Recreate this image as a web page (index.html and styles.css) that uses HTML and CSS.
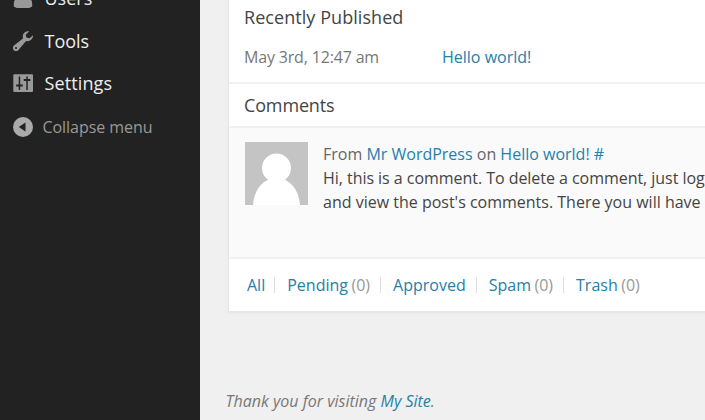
FILE: index.html
```html
<!DOCTYPE html>
<html lang="en">
<head>
<meta charset="utf-8">
<title>Dashboard</title>
<link rel="stylesheet" href="styles.css">
</head>
<body>
<div class="admin">
  <nav class="menu">
    <a class="item"><svg class="icon" viewBox="0 0 20 20"><circle cx="10" cy="5" r="4.500"/><path d="M0.800 18.500v-3c0-3 2-6 5.500-7l3.700 3.500 3.700-3.500c3.500 1 5.500 4 5.500 7v3l-3 1.500h-12.400z"/></svg><span class="label users">Users</span></a>
    <a class="item"><svg class="icon" viewBox="0 0 20 20"><path d="M16.300 0.300C13 -.4 9.800 2 9.800 5.200c0 .8.100 1.500.400 2.100L1 14.600c-1.400 1.200-1.500 3.300-.2 4.600 1.300 1.300 3.400 1.200 4.600-.2l7.700-9.100c3.700 1.100 7.200-1.700 7-5.800L16.600 7.300l-3.200-.8-.7-2.800z"/><circle class="cut" cx="3" cy="17" r="1"/></svg><span class="label">Tools</span></a>
    <a class="item"><svg class="icon" viewBox="0 0 20 20"><rect x="0.300" y="1.200" width="19.700" height="17.800" rx="1"/><path class="cut" d="M5.700 3.500h1.500v8h2.600v2H7.200V17H5.700v-3.500H3.200v-2h2.500zM13.300 3.500h1.500v2.600h2.600v2h-2.600V17h-1.500V8.100h-2.600v-2h2.600z"/></svg><span class="label settings">Settings</span></a>
    <a class="item collapse"><svg class="icon" viewBox="0 0 20 20"><circle cx="10" cy="10" r="10"/><path class="cut" d="M12.500 5.500v9L5.800 10z"/></svg><span class="label">Collapse menu</span></a>
  </nav>
  <main class="content">
    <section class="card">
      <div class="published">
        <h4>Recently Published</h4>
        <div class="entry"><span class="date">May 3rd, 12:47 am</span><a>Hello world!</a></div>
      </div>
      <h4 class="heading">Comments</h4>
      <div class="comment">
        <svg class="avatar" viewBox="0 0 63 63"><rect width="63" height="63" fill="#c4c4c4"/><circle cx="31.500" cy="26" r="14.500"/><path d="M8 63C9 50 15 41 24 37.500h15C48 41 54 50 55 63z"/></svg>
        <div class="body">
          <p class="from">From <a>Mr WordPress</a> on <a>Hello world!</a> <a>#</a></p>
          <p class="first">Hi, this is a comment. To delete a comment, just log</p>
          <p>and view the post's comments. There you will have</p>
        </div>
      </div>
      <div class="filters">
        <span class="filter all"><a>All</a></span>
        <span class="filter"><a>Pending</a> (0)</span>
        <span class="filter"><a>Approved</a></span>
        <span class="filter"><a>Spam</a> (0)</span>
        <span class="filter"><a>Trash</a> (0)</span>
      </div>
    </section>
    <footer>Thank you for visiting <a>My Site</a>.</footer>
  </main>
</div>
</body>
</html>
```
FILE: styles.css
```css
* { box-sizing: border-box; }
body { margin: 0; overflow: hidden; background: #f0f0f0; font-family: "Open Sans", sans-serif; font-size: 16px; color: #444; }
.admin { display: flex; width: 705px; height: 420px; overflow: hidden; white-space: nowrap; }
.menu { flex: none; width: 200px; background: #222; padding-left: 12.500px; overflow: hidden; }
.item { display: flex; align-items: center; height: 42.500px; color: #eee; font-size: 18px; gap: 12px; }
.item:first-child { margin-top: -23px; }
.icon { width: 20px; height: 20px; fill: #999; flex: none; }
.settings { letter-spacing: 0.12px; }
.cut { fill: #222; }
.collapse { color: #999; font-size: 16px; gap: 10px; height: 44px; letter-spacing: -0.05px; }
.collapse .icon { fill: #aaa; }
.content { flex: none; width: 505px; padding-left: 29px; }
.card { height: 311px; background: #fff; box-shadow: 0 0 0 1px #e7e7e7, 0 1px 2px 1px #e4e4e4; }
.published { height: 84px; padding: 5px 0 0 15px; border-bottom: 2px solid #f2f2f2; }
h4 { margin: 0; font-size: 18px; line-height: 24px; font-weight: 400; color: #444; letter-spacing: 0.06px; }
.entry { display: flex; padding-top: 16px; line-height: 24px; }
.date { width: 198px; color: #777; letter-spacing: -0.17px; }
a { color: #2580aa; }
.heading { height: 42px; line-height: 42px; padding-left: 15px; letter-spacing: -0.15px; }
.comment { display: flex; gap: 15px; height: 133px; padding: 14px 0 0 16px; background: #fafafa; border: solid #f0f0f0; border-width: 2px 0; overflow: hidden; }
.avatar { width: 63px; height: 63px; fill: #fff; flex: none; }
.body p { margin: 0; line-height: 24px; }
.body .from { color: #666; }
.body .first { letter-spacing: -0.04px; }
.filters { display: flex; align-items: center; height: 52px; padding: 0 0 0 18px; color: #999; }
.filter { display: flex; align-items: center; gap: 3.500px; }
.filter + .filter::before { content: ""; width: 1px; height: 16px; background: #ddd; margin: 0 8.500px 0 10px; }
.all { margin-right: -1px; }
footer { padding-top: 77.500px; margin-left: -3.500px; line-height: 24px; font-style: italic; color: #777; }
```
